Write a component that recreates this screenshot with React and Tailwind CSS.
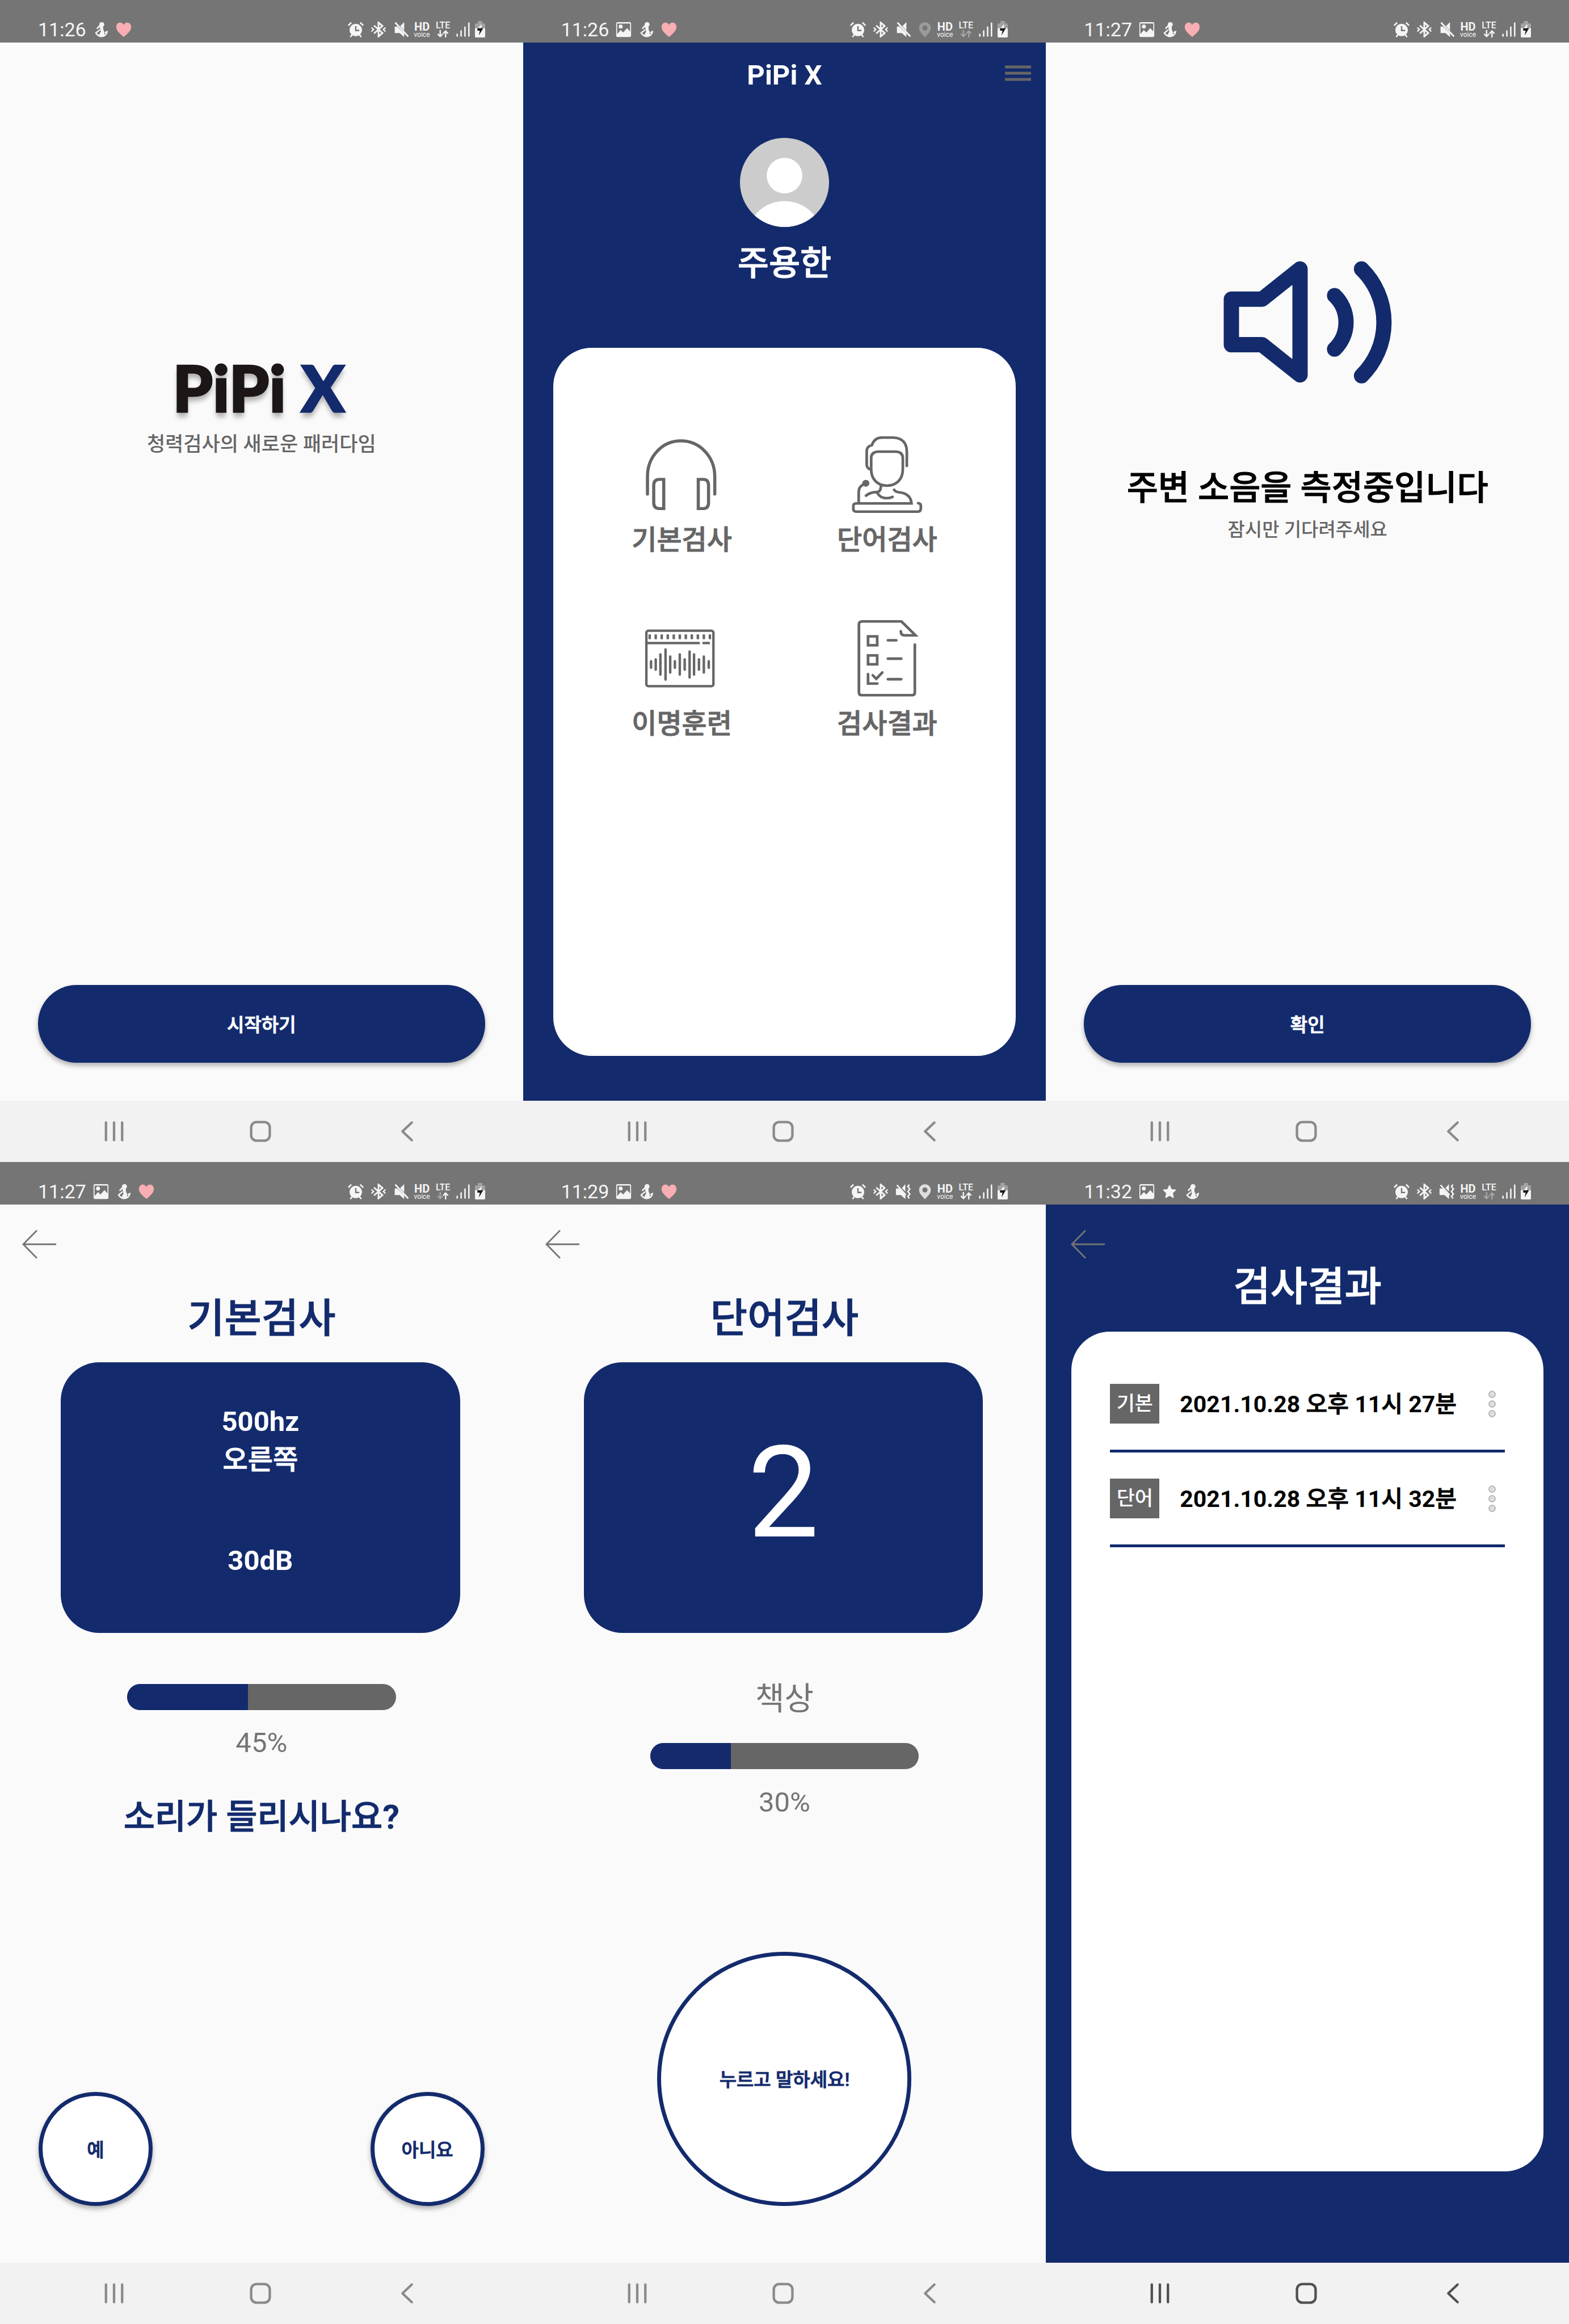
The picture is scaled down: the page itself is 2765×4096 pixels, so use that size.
import React from 'react';

/* ---------- text ---------- */

// Latin runs are bold, Hangul runs are slightly thickened.
function Strong({ children }) {
  const runs = String(children).split(/([\uac00-\ud7a3]+)/).filter(Boolean);
  return runs.map((run, i) => (
    <span key={i} className={/[\uac00-\ud7a3]/.test(run) ? 'font-medium [-webkit-text-stroke:1px_currentColor]' : 'font-bold'}>
      {run}
    </span>
  ));
}

/* ---------- status bar icons ---------- */

const icon = 'block h-[28px] w-[28px] shrink-0';

function PictureIcon() {
  return (
    <svg viewBox="0 0 32 32" className={icon} fill="currentColor">
      <path
        fillRule="evenodd"
        d="M4 1H28Q31 1 31 4V28Q31 31 28 31H4Q1 31 1 28V4Q1 1 4 1ZM3 4V25L10 17L15 22L23 13L29 20V4ZM10 6A4 4 0 1 1 10 14A4 4 0 1 1 10 6Z"
      />
    </svg>
  );
}

function FigureIcon() {
  return (
    <svg viewBox="0 0 32 32" className={icon} fill="none" stroke="currentColor" strokeLinecap="round" strokeLinejoin="round">
      <circle cx="17.5" cy="6" r="5" fill="currentColor" stroke="none" />
      <path d="M14 8L8.5 13.5" strokeWidth="3" />
      <path d="M14 11H20V16Q23 20 23 28Q17 31 12 28L16 20Z" fill="currentColor" strokeWidth="1" />
      <path d="M13 17L5.500 23Q11 30 17 30Q26 30 28.500 20L25 22" strokeWidth="2.800" />
    </svg>
  );
}

function HeartIcon() {
  return (
    <svg viewBox="0 0 32 32" className={icon}>
      <path d="M16 31C7 23 1 18 1 11C1 5 5 2 9 2C12 2 15 4 16 7C17 4 20 2 23 2C27 2 31 5 31 11C31 18 25 23 16 31Z" fill="#f8aeb2" />
    </svg>
  );
}

function StarIcon() {
  return (
    <svg viewBox="0 0 32 32" className={icon} fill="currentColor" stroke="currentColor" strokeWidth="2" strokeLinejoin="round">
      <path d="M16 4L19.700 12L28 13L21.800 19L23.500 28L16 23.500L8.500 28L10.200 19L4 13L12.300 12Z" />
    </svg>
  );
}

function AlarmIcon() {
  return (
    <svg viewBox="0 0 32 32" className={icon} fill="none" stroke="currentColor" strokeWidth="3">
      <circle cx="16" cy="17" r="12.500" fill="currentColor" stroke="none" />
      <path d="M1 8L7 2M31 8L25 2M5 31L9 26M27 31L23 26" />
      <path d="M16 9V18H23" stroke="#757575" strokeWidth="2.800" />
    </svg>
  );
}

function BluetoothIcon() {
  return (
    <svg viewBox="0 0 32 32" className={icon} fill="none" stroke="currentColor" strokeWidth="3.400">
      <path d="M7 8L24 23L16 30V2L24 9L7 24" />
      <path d="M2 12L6 16L2 20M30 12L26 16L30 20" strokeWidth="2.800" />
    </svg>
  );
}

function MuteIcon() {
  return (
    <svg viewBox="0 0 32 32" className={icon}>
      <path d="M22 1V18L14 9ZM3 10H8L22 24V31L13 23H3Z" fill="currentColor" />
      <path d="M4 2L30 30" stroke="currentColor" strokeWidth="3.200" />
    </svg>
  );
}

function VibrateIcon() {
  return (
    <svg viewBox="0 0 32 32" className={icon} fill="none" stroke="currentColor">
      <path d="M20 1V16L13 9ZM1 10H7L20 23V31L11 23H1Z" fill="currentColor" stroke="none" />
      <path d="M3 3L21 23" strokeWidth="3" />
      <path d="M28 2L25 6L29 11L25 16L29 21L25 26L28 30" strokeWidth="2.800" />
    </svg>
  );
}

function PinIcon({ dim }) {
  return (
    <svg viewBox="2 0 28 32" className="block h-[28px] w-[24px] shrink-0" fill={dim ? '#9b9b9b' : '#dedede'}>
      <path
        fillRule="evenodd"
        d="M16 1C23 1 28 6 28 13C28 20 22 25 16 32C10 25 4 20 4 13C4 6 9 1 16 1ZM16 7.500A5.300 5.300 0 1 0 16 18.100A5.300 5.300 0 1 0 16 7.500Z"
      />
    </svg>
  );
}

function HdVoice() {
  return (
    <span className="flex w-[28px] flex-col items-center">
      <span className="text-[20px] leading-[18px] font-bold">HD</span>
      <span className="text-[12px] leading-[10px]">voice</span>
    </span>
  );
}

function Lte({ down, up }) {
  const tone = (on) => (on ? '#f5f5f5' : '#a6a6a6');
  return (
    <span className="flex w-[28px] flex-col items-center">
      <span className="text-[16px] leading-[16px] font-medium">LTE</span>
      <svg viewBox="0 0 24 15" className="h-[13px] w-[21px]" fill="none" strokeWidth="2.800">
        <path d="M6.500 0V12M1.500 8L6.500 13L11.500 8" stroke={tone(down)} />
        <path d="M17.500 15V3M12.500 7L17.500 2L22.500 7" stroke={tone(up)} />
      </svg>
    </span>
  );
}

function SignalIcon() {
  return (
    <svg viewBox="0 0 28 32" className="block h-[28px] w-[24px]" stroke="currentColor" strokeWidth="3" strokeLinecap="round">
      <path d="M2 26V29.500M10 19V29.500M18 11V29.500M26 3V29.500" />
    </svg>
  );
}

function BatteryIcon() {
  return (
    <svg viewBox="0 0 21 34" className="block h-[29px] w-[18px]">
      <path d="M6 0H15V5H19Q21 5 21 7V16H0V7Q0 5 2 5H6Z" fill="#a3a3a3" />
      <path d="M0 15H21V32Q21 34 19 34H2Q0 34 0 32Z" fill="#f5f5f5" />
      <path d="M12 8L14 8L12.500 16H5Z" fill="#f5f5f5" />
      <path d="M5 15H17L8 30L10 20H5Z" fill="#1a1a1a" />
    </svg>
  );
}

const notices = { picture: PictureIcon, figure: FigureIcon, heart: HeartIcon, star: StarIcon };

function StatusBar({ time, left, vibrate, pin, down = true, up = true }) {
  return (
    <header className="flex h-[75px] items-center justify-between bg-[#757575] pt-[28px] pr-[67px] pl-[67px] text-[#f5f5f5]">
      <div className="flex items-center gap-[12px]">
        <time className="text-[34px] leading-[40px]">{time}</time>
        {left.map((name) => {
          const Notice = notices[name];
          return <Notice key={name} />;
        })}
      </div>
      <div className="flex items-center gap-[9px]">
        <div className="flex items-center gap-[12px]">
          <AlarmIcon />
          <BluetoothIcon />
          {vibrate ? <VibrateIcon /> : <MuteIcon />}
          {pin && <PinIcon dim={pin === 'dim'} />}
        </div>
        <HdVoice />
        <Lte down={down} up={up} />
        <SignalIcon />
        <BatteryIcon />
      </div>
    </header>
  );
}

/* ---------- navigation bar ---------- */

function NavBar({ dark }) {
  return (
    <nav
      className={`grid h-[108px] grid-cols-3 items-center justify-items-center bg-[#f2f2f2] pr-[76px] pl-[72px] ${dark ? 'text-[#505050]' : 'text-[#8a8a8a]'}`}
    >
      <button type="button" aria-label="최근 앱">
        <svg viewBox="0 0 44 44" className="block h-[38px] w-[38px]" stroke="currentColor" strokeWidth="5" strokeLinecap="round">
          <path d="M5.500 4V40M22 4V40M38.500 4V40" />
        </svg>
      </button>
      <button type="button" aria-label="홈">
        <svg viewBox="0 0 44 44" className="block h-[38px] w-[38px]" fill="none" stroke="currentColor" strokeWidth="5">
          <rect x="3" y="3" width="38" height="38" rx="11" />
        </svg>
      </button>
      <button type="button" aria-label="뒤로">
        <svg viewBox="0 0 44 44" className="block h-[38px] w-[38px]" fill="none" stroke="currentColor" strokeWidth="5" strokeLinecap="round" strokeLinejoin="round">
          <path d="M32 4L13 22L32 40" />
        </svg>
      </button>
    </nav>
  );
}

function Phone({ status, navy, darkNav, children }) {
  return (
    <section className="flex min-w-0 flex-col">
      <StatusBar {...status} />
      <main className={`flex flex-1 flex-col ${navy ? 'bg-[#132b6d]' : 'bg-[#fafafa]'}`}>{children}</main>
      <NavBar dark={darkNav} />
    </section>
  );
}

/* ---------- shared controls ---------- */

function WideButton({ children }) {
  return (
    <button
      type="button"
      className="mx-[67px] mt-auto mb-[67px] h-[137px] rounded-[68px] bg-[#132b6d] pt-[4px] text-[33px] text-white shadow-[0_5px_8px_rgba(0,0,0,0.3)]"
    >
      <Strong>{children}</Strong>
    </button>
  );
}

function RoundButton({ large, children }) {
  return (
    <button
      type="button"
      className={`rounded-full border-[7px] border-[#132b6d] bg-white pt-[4px] text-[33px] text-[#132b6d] ${
        large ? 'size-[448px]' : 'size-[201px] shadow-[0_5px_8px_rgba(0,0,0,0.3)]'
      }`}
    >
      <Strong>{children}</Strong>
    </button>
  );
}

function BackButton() {
  return (
    <button type="button" aria-label="뒤로 가기" className="text-[#757575]">
      <svg viewBox="0 0 60 50" className="block h-[50px] w-[60px]" fill="none" stroke="currentColor" strokeWidth="2.800">
        <path d="M26 0.500L2 25L26 49.500M2 25H60" />
      </svg>
    </button>
  );
}

function Progress({ value, label }) {
  return (
    <div
      role="progressbar"
      aria-label={label}
      aria-valuenow={value}
      aria-valuemin={0}
      aria-valuemax={100}
      className="mx-[224px] h-[46px] overflow-hidden rounded-full bg-[#666666]"
    >
      <div className="h-full bg-[#132b6d]" style={{ width: `${value}%` }} />
    </div>
  );
}

/* ---------- screens ---------- */

function StartScreen() {
  return (
    <Phone status={{ time: '11:26', left: ['figure', 'heart'] }}>
      <h1 className="mt-[547px] pr-[10px] text-center font-['Lato',sans-serif] text-[113px] leading-[120px] font-black text-[#1c1616] [-webkit-text-stroke:3px_currentColor] [text-shadow:0_9px_8px_rgba(0,0,0,0.3)]">
        PiPi <span className="text-[#132b6d]">X</span>
      </h1>
      <p className="mt-[18px] text-center text-[35px] leading-[48px] font-medium text-[#666666]">청력검사의 새로운 패러다임</p>
      <WideButton>시작하기</WideButton>
    </Phone>
  );
}

const menuIcon = 'block h-[135px] w-[139px]';

function HeadphonesIcon() {
  return (
    <svg viewBox="149 93 354 354" preserveAspectRatio="none" className={menuIcon} fill="none" stroke="currentColor" strokeWidth="14">
      <path d="M172 360V278C172 190 235 114 322 114S474 190 474 278V360" strokeLinecap="round" />
      <path d="M245 292V427H226Q200 427 200 400V320Q200 292 226 292Z" />
      <path d="M400 292V427H422Q446 427 446 400V320Q446 292 422 292Z" />
    </svg>
  );
}

function SpeakerPersonIcon() {
  return (
    <svg viewBox="1070 93 354 354" preserveAspectRatio="none" className={menuIcon} fill="none" stroke="currentColor" strokeWidth="12" strokeLinecap="round">
      <path d="M1170 245Q1155 240 1155 222V160Q1155 140 1178 134Q1190 99 1222 99H1275Q1335 102 1335 165V230" />
      <path d="M1175 195Q1175 164 1208 164H1284Q1317 164 1317 195V245C1317 290 1290 321 1246 321S1175 290 1175 245Z" />
      <circle cx="1151" cy="310" r="16" fill="currentColor" stroke="none" />
      <path d="M1119 402V350Q1119 325 1143 314" />
      <path d="M1219 320Q1219 350 1200 351Q1172 350 1152 367M1202 354Q1215 379 1245 379Q1260 379 1271 373" />
      <path d="M1278 340Q1285 352 1303 352Q1352 358 1356 403H1108Q1095 403 1095 415V428Q1095 441 1108 441H1386Q1398 440 1398 425V415Q1398 403 1386 402" />
    </svg>
  );
}

const waveBars = [
  [188, 15], [209, 24], [230, 47], [253, 70], [274, 37], [295, 15], [317, 47],
  [339, 24], [361, 60], [381, 47], [403, 24], [425, 37], [447, 15],
];

function WaveIcon() {
  return (
    <svg viewBox="149 945 354 354" preserveAspectRatio="none" className={menuIcon} fill="none" stroke="currentColor" strokeWidth="11">
      <rect x="167" y="994" width="301" height="256" rx="9" />
      {Array.from({ length: 11 }, (_, i) => (
        <path key={i} d={`M${182 + 27 * i} 1011V1033`} />
      ))}
      <path d="M168 1051H407M419 1051H452" />
      {waveBars.map(([x, half]) => (
        <path key={x} d={`M${x} ${1150 - half}V${1150 + half}`} strokeLinecap="round" />
      ))}
    </svg>
  );
}

function ChecklistIcon() {
  return (
    <svg viewBox="1070 945 354 354" preserveAspectRatio="none" className={menuIcon} fill="none" stroke="currentColor" strokeWidth="12">
      <path d="M1371 1058V1280Q1371 1292 1356 1292H1133Q1120 1292 1120 1278V965Q1120 951 1135 951H1311L1374 1015H1325Q1308 1015 1308 996" strokeLinecap="round" />
      <rect x="1161" y="1020" width="41" height="41" />
      <rect x="1161" y="1108" width="41" height="41" />
      <path d="M1161 1194V1238H1203M1182 1200L1198 1216L1225 1187M1250 1038H1288M1250 1123H1310M1250 1218H1310" strokeLinecap="round" />
    </svg>
  );
}

const menu = [
  ['기본검사', HeadphonesIcon],
  ['단어검사', SpeakerPersonIcon],
  ['이명훈련', WaveIcon],
  ['검사결과', ChecklistIcon],
];

function HomeScreen() {
  return (
    <Phone navy status={{ time: '11:26', left: ['picture', 'figure', 'heart'], pin: 'dim', down: false, up: false }}>
      <div className="mt-[26px] grid grid-cols-[1fr_auto_1fr] text-white">
        <h1 className="col-start-2 text-[49px] leading-[64px] font-bold">PiPi X</h1>
        <button type="button" aria-label="메뉴" className="mr-[26px] flex h-[56px] items-center justify-self-end text-[#666666]">
          <svg viewBox="0 0 46 28" className="block h-[28px] w-[46px]" stroke="currentColor" strokeWidth="5">
            <path d="M0 3H46M0 14H46M0 25H46" />
          </svg>
        </button>
      </div>
      <svg viewBox="0 0 100 100" className="mx-auto mt-[78px] block size-[157px] rounded-full bg-[#cccccc]" fill="white">
        <circle cx="50" cy="42.400" r="20" />
        <circle cx="50" cy="114" r="43" />
      </svg>
      <p className="mt-[25px] text-center text-[60px] leading-[80px] text-white">
        <Strong>주용한</Strong>
      </p>
      <div className="mx-[53px] mt-[108px] mb-[79px] flex-1 rounded-[68px] bg-white px-[46px] pt-[156px]">
        <ul className="grid grid-cols-2 gap-y-[109px]">
          {menu.map(([label, MenuIcon]) => (
            <li key={label} className="flex justify-center">
              <button type="button" className="flex flex-col items-center gap-[16px] text-[#666666]">
                <MenuIcon />
                <span className="text-[48px] leading-[64px]">
                  <Strong>{label}</Strong>
                </span>
              </button>
            </li>
          ))}
        </ul>
      </div>
    </Phone>
  );
}

function NoiseScreen() {
  return (
    <Phone status={{ time: '11:27', left: ['picture', 'figure', 'heart'] }}>
      <svg
        viewBox="227 39 348 253"
        className="mx-auto mt-[385px] block h-[216px] w-[297px]"
        fill="none"
        stroke="#132b6d"
        strokeWidth="31.600"
        strokeLinecap="round"
        strokeLinejoin="round"
      >
        <path d="M243.400 117.700H307L385.200 55.400V274.200L307 211.900H243.400Z" />
        <path d="M456.600 110.300A76.800 76.800 0 0 1 456.600 221" />
        <path d="M512.200 55.400A154.500 154.500 0 0 1 512.200 276" />
      </svg>
      <h2 className="mt-[145px] text-center text-[60px] leading-[80px] text-black">
        <Strong>주변 소음을 측정중입니다</Strong>
      </h2>
      <p className="mt-[11px] text-center text-[33px] leading-[44px] font-medium text-[#666666]">잠시만 기다려주세요</p>
      <WideButton>확인</WideButton>
    </Phone>
  );
}

function TestHeading({ children }) {
  return (
    <>
      <div className="mt-[45px] flex pl-[39px]">
        <BackButton />
      </div>
      <h2 className="mt-[58px] mb-[29px] text-center text-[71px] leading-[96px] text-[#132b6d]">
        <Strong>{children}</Strong>
      </h2>
    </>
  );
}

function ToneScreen() {
  return (
    <Phone status={{ time: '11:27', left: ['picture', 'figure', 'heart'], down: false }}>
      <TestHeading>기본검사</TestHeading>
      <div className="mr-[111px] ml-[107px] rounded-[68px] bg-[#132b6d] pt-[71px] pb-[94px] text-center text-[49px] leading-[67px] text-white">
        <p className="font-bold">500hz</p>
        <p className="text-[48px]">
          <Strong>오른쪽</Strong>
        </p>
        <p className="mt-[111px] font-bold">30dB</p>
      </div>
      <div className="mt-[90px]">
        <Progress value={45} label="기본검사 진행률" />
      </div>
      <p className="mt-[26px] text-center text-[49px] leading-[64px] text-[#757575]">45%</p>
      <p className="mt-[59px] text-center text-[60px] leading-[80px] text-[#132b6d]">
        <Strong>소리가 들리시나요?</Strong>
      </p>
      <div className="mx-[68px] mt-auto mb-[100px] flex justify-between">
        <RoundButton>예</RoundButton>
        <RoundButton>아니요</RoundButton>
      </div>
    </Phone>
  );
}

function WordScreen() {
  return (
    <Phone status={{ time: '11:29', left: ['picture', 'figure', 'heart'], vibrate: true, pin: 'on' }}>
      <TestHeading>단어검사</TestHeading>
      <div className="mr-[111px] ml-[107px] flex h-[477px] items-center justify-center rounded-[68px] bg-[#132b6d] pb-[16px] text-white">
        <p className="text-[224px] leading-[280px]">2</p>
      </div>
      <p className="mt-[80px] text-center text-[56px] leading-[72px] text-[#757575]">책상</p>
      <div className="mt-[42px]">
        <Progress value={30} label="단어검사 진행률" />
      </div>
      <p className="mt-[27px] text-center text-[49px] leading-[64px] text-[#757575]">30%</p>
      <div className="mt-auto mb-[100px] flex justify-center">
        <RoundButton large>누르고 말하세요!</RoundButton>
      </div>
    </Phone>
  );
}

const results = [
  ['기본', '2021.10.28 오후 11시 27분'],
  ['단어', '2021.10.28 오후 11시 32분'],
];

function ResultsScreen() {
  return (
    <Phone navy darkNav status={{ time: '11:32', left: ['picture', 'star', 'figure'], vibrate: true, down: false, up: false }}>
      <div className="mt-[45px] flex pl-[44px]">
        <BackButton />
      </div>
      <h2 className="mt-[2px] text-center text-[71px] leading-[96px] text-white">
        <Strong>검사결과</Strong>
      </h2>
      <div className="mx-[45px] mt-[31px] mb-[161px] flex-1 rounded-[68px] bg-white px-[68px] pt-[46px]">
        <ul>
          {results.map(([kind, date]) => (
            <li key={kind} className="flex items-center border-b-[5px] border-[#132b6d] py-[46px]">
              <span className="flex h-[70px] w-[87px] items-center justify-center bg-[#666666] pt-[3px] text-[35px] font-medium text-white">
                {kind}
              </span>
              <span className="ml-[36px] pt-[2px] text-[41px] leading-[56px] whitespace-nowrap text-black">
                <Strong>{date}</Strong>
              </span>
              <button type="button" aria-label="더보기" className="mr-[16px] ml-auto flex flex-col gap-[4px]">
                {[0, 1, 2].map((dot) => (
                  <span key={dot} className="block size-[13px] rounded-full border-2 border-[#b8b8b8] bg-[#dedede]" />
                ))}
              </button>
            </li>
          ))}
        </ul>
      </div>
    </Phone>
  );
}

export default function App() {
  return (
    <div className="grid min-h-screen grid-cols-3 grid-rows-2 font-['Roboto','Noto_Sans_CJK_KR',sans-serif]">
      <StartScreen />
      <HomeScreen />
      <NoiseScreen />
      <ToneScreen />
      <WordScreen />
      <ResultsScreen />
    </div>
  );
}
